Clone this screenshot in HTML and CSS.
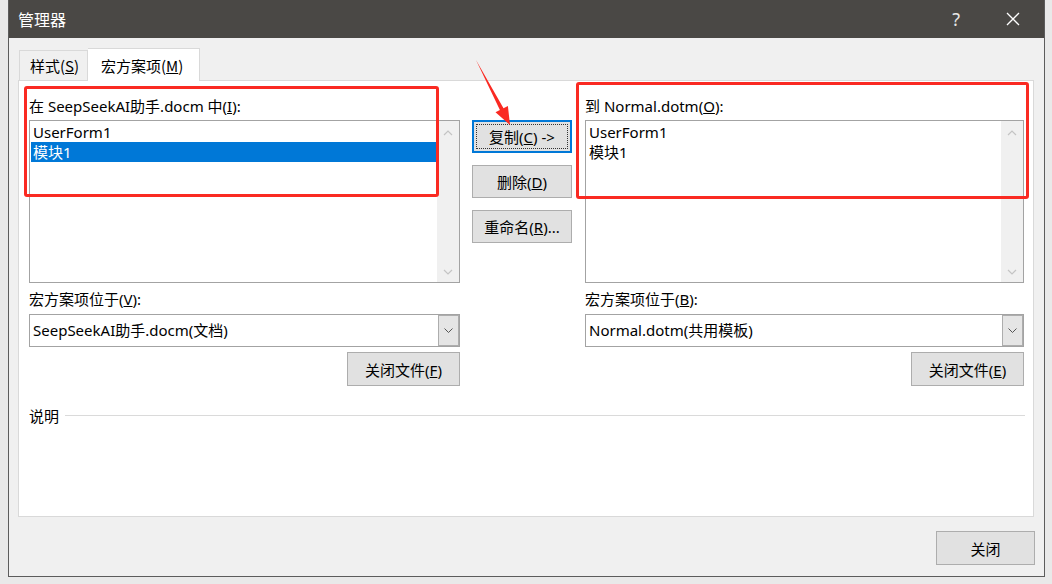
FILE: index.html
```html
<!DOCTYPE html>
<html lang="zh-CN">

<head>
    <meta charset="UTF-8">
    <title>管理器</title>
    <link rel="stylesheet" href="styles.css">
</head>

<body>
    <div class="window">
        <div class="titlebar">
            <span class="title">管理器</span>
            <span class="help">?</span>
            <span class="close-x">
                <svg width="14" height="14" viewBox="0 0 14 14"><path d="M1 1L13 13M13 1L1 13" stroke="#fff" stroke-width="1.3"/></svg>
            </span>
        </div>

        <div class="body">
            <div class="tabs">
                <div class="tab">样式(<u>S</u>)</div>
                <div class="tab active">宏方案项(<u>M</u>)</div>
            </div>

            <div class="panel">
                <div class="columns">
                    <div class="side">
                        <div class="label">在 SeepSeekAI助手.docm 中(<u>I</u>):</div>
                        <div class="listbox">
                            <div class="items">
                                <div class="item">UserForm1</div>
                                <div class="item selected">模块1</div>
                            </div>
                            <div class="scroll">
                                <svg width="10" height="6" viewBox="0 0 10 6"><path d="M1 5L5 1L9 5" fill="none" stroke="#c4c4c4" stroke-width="1.2"/></svg>
                                <svg width="10" height="6" viewBox="0 0 10 6"><path d="M1 1L5 5L9 1" fill="none" stroke="#c4c4c4" stroke-width="1.2"/></svg>
                            </div>
                        </div>
                        <div class="label second">宏方案项位于(<u>V</u>):</div>
                        <div class="select">
                            <span class="select-text">SeepSeekAI助手.docm(文档)</span>
                            <span class="drop">
                                <svg width="9" height="5" viewBox="0 0 9 5"><path d="M0.5 0.5L4.5 4.5L8.5 0.5" fill="none" stroke="#555" stroke-width="1"/></svg>
                            </span>
                        </div>
                        <button class="btn close-file">关闭文件(<u>F</u>)</button>
                    </div>

                    <div class="middle">
                        <button class="btn focused"><span class="focus-ring">复制(<u>C</u>) -&gt;</span></button>
                        <button class="btn">删除(<u>D</u>)</button>
                        <button class="btn">重命名(<u>R</u>)...</button>
                    </div>

                    <div class="side">
                        <div class="label">到 Normal.dotm(<u>O</u>):</div>
                        <div class="listbox">
                            <div class="items">
                                <div class="item">UserForm1</div>
                                <div class="item">模块1</div>
                            </div>
                            <div class="scroll">
                                <svg width="10" height="6" viewBox="0 0 10 6"><path d="M1 5L5 1L9 5" fill="none" stroke="#c4c4c4" stroke-width="1.2"/></svg>
                                <svg width="10" height="6" viewBox="0 0 10 6"><path d="M1 1L5 5L9 1" fill="none" stroke="#c4c4c4" stroke-width="1.2"/></svg>
                            </div>
                        </div>
                        <div class="label second">宏方案项位于(<u>B</u>):</div>
                        <div class="select">
                            <span class="select-text">Normal.dotm(共用模板)</span>
                            <span class="drop">
                                <svg width="9" height="5" viewBox="0 0 9 5"><path d="M0.5 0.5L4.5 4.5L8.5 0.5" fill="none" stroke="#555" stroke-width="1"/></svg>
                            </span>
                        </div>
                        <button class="btn close-file">关闭文件(<u>E</u>)</button>
                    </div>
                </div>

                <div class="desc">
                    <span>说明</span>
                    <span class="rule"></span>
                </div>
            </div>

            <div class="footer">
                <button class="btn close-btn">关闭</button>
            </div>
        </div>
    </div>

    <!-- red annotation marks -->
    <div class="mark mark-left"></div>
    <div class="mark mark-right"></div>
    <svg class="arrow" width="50" height="75" viewBox="0 0 50 75">
        <polygon points="6,5 33.5,53.2 37.9,50.9 40,70 25.5,57.3 29.9,55 " fill="#fa2a22"/>
    </svg>
</body>

</html>
```

FILE: styles.css
```css
body {
    margin: 0;
    background: #e9e9e9;
    font-family: "Noto Sans", "Noto Sans CJK SC", sans-serif;
    font-size: 15px;
    color: #000;
    position: relative;
    height: 584px;
    overflow: hidden;
}

.window {
    margin-left: 8px;
    width: 1035px;
    height: 576px;
    border: 1px solid #5c5c5c;
    border-top: none;
    background: #f0f0f0;
    display: flex;
    flex-direction: column;
}

.titlebar {
    height: 38px;
    background: #4a4845;
    color: #fff;
    display: flex;
    align-items: center;
    flex-shrink: 0;
}

.title {
    font-family: "Noto Sans CJK SC", sans-serif;
    font-size: 16px;
    margin-left: 9px;
    flex: 1;
}

.help {
    font-size: 18px;
    color: #e6e6e6;
    margin-right: 46px;
}

.close-x {
    display: flex;
    margin-right: 24px;
}

.body {
    flex: 1;
    display: flex;
    flex-direction: column;
    padding: 10px 10px 0 9px;
}

.tabs {
    display: flex;
    align-items: flex-end;
    height: 32px;
    margin-left: 1px;
    position: relative;
    z-index: 1;
}

.tab {
    height: 30px;
    line-height: 30px;
    padding: 0 0 0 10px;
    border: 1px solid #d9d9d9;
    border-bottom: none;
    box-sizing: border-box;
    background: #f0f0f0;
    font-family: "Noto Sans CJK SC", sans-serif;
    width: 69px;
    white-space: nowrap;
}

.tab.active {
    height: 33px;
    width: 112px;
    line-height: 33px;
    background: #fff;
    padding-left: 13px;
    margin-bottom: -1px;
    border-left: none;
}

.panel {
    height: 437px;
    box-sizing: border-box;
    background: #fff;
    border: 1px solid #d9d9d9;
    padding: 15px 0 0 10px;
}

.columns {
    display: grid;
    grid-template-columns: 431px 125px 439px;
}

.side {
    display: flex;
    flex-direction: column;
}

.label {
    height: 20px;
    line-height: 20px;
    white-space: nowrap;
}

.label.second {
    margin-top: 6px;
}

.listbox {
    margin-top: 4px;
    height: 163px;
    box-sizing: border-box;
    border: 1px solid #a3a3a3;
    display: flex;
}

.items {
    flex: 1;
    padding: 1px;
}

.item {
    height: 20px;
    line-height: 20px;
    padding-left: 2px;
}

.item.selected {
    background: #0078d7;
    color: #fff;
}

.scroll {
    width: 22px;
    background: #f0f0f0;
    display: flex;
    flex-direction: column;
    align-items: center;
    justify-content: space-between;
    padding: 9px 0 7px;
}

.select {
    margin-top: 5px;
    height: 33px;
    box-sizing: border-box;
    border: 1px solid #a3a3a3;
    display: flex;
    align-items: stretch;
}

.select-text {
    flex: 1;
    line-height: 31px;
    padding-left: 3px;
}

.drop {
    width: 21px;
    background: #e5e5e5;
    border: 1px solid #adadad;
    box-sizing: border-box;
    display: flex;
    align-items: center;
    justify-content: center;
}

.btn {
    font-family: "Noto Sans", "Noto Sans CJK SC", sans-serif;
    font-size: 15px;
    color: #000;
    background: #e1e1e1;
    border: 1px solid #adadad;
    padding: 0;
    box-sizing: border-box;
}

.close-file {
    align-self: flex-end;
    width: 113px;
    height: 34px;
    margin-top: 5px;
}

.middle {
    display: flex;
    flex-direction: column;
    padding: 24px 0 0 12px;
    gap: 12px;
}

.middle .btn {
    width: 100px;
    height: 33px;
}

.btn.focused {
    border: 2px solid #0078d7;
    padding: 2px;
}

.focus-ring {
    display: flex;
    align-items: center;
    justify-content: center;
    height: 100%;
    border: 1px dotted #333;
    box-sizing: border-box;
}

.desc {
    display: flex;
    align-items: center;
    margin-top: 19px;
    margin-right: 8px;
    height: 20px;
}

.rule {
    flex: 1;
    height: 1px;
    background: #dadada;
    margin-left: 6px;
}

.footer {
    display: flex;
    justify-content: flex-end;
    padding-top: 14px;
}

.close-btn {
    width: 99px;
    height: 34px;
    margin-right: -1px;
}

.mark {
    position: absolute;
    border: 3px solid #fa2a22;
    border-radius: 3px;
    box-sizing: border-box;
}

.mark-left {
    left: 24px;
    top: 86px;
    width: 415px;
    height: 111px;
}

.mark-right {
    left: 576px;
    top: 82px;
    width: 453px;
    height: 117px;
}

.arrow {
    position: absolute;
    left: 470px;
    top: 55px;
}
```
